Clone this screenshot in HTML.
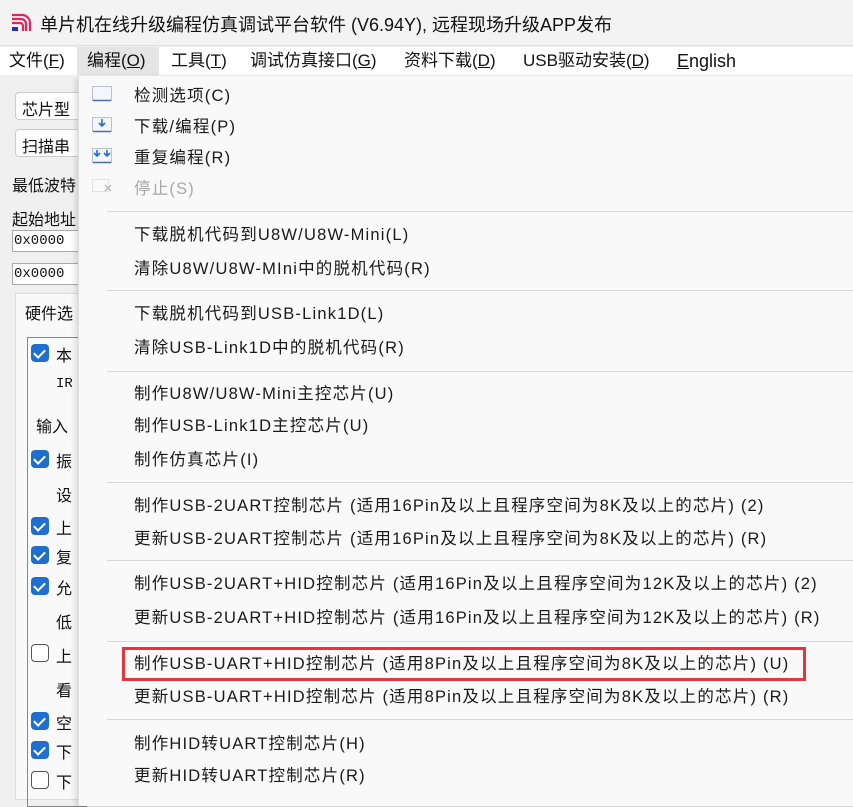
<!DOCTYPE html>
<html><head><meta charset="utf-8"><style>
*{margin:0;padding:0;box-sizing:border-box}
body{width:853px;height:800px;overflow:hidden;background:#f0f0f0;font-family:"Liberation Sans","Noto Sans CJK SC",sans-serif;position:relative;color:#111}
.a{position:absolute;white-space:nowrap}
#title{left:0;top:0;width:853px;height:46px;background:#f3f3f3;border-bottom:1px solid #e0e0e0}
#mb{left:0;top:47px;width:853px;height:28px;background:#fff;font-size:17px}
.mi{position:absolute;top:2px;line-height:24px}
.sel{background:#e5e5e5;}
#menu{left:78px;top:76px;width:780px;height:730px;background:#f9f9f9;border-left:1px solid #ddd;box-shadow:-2px 2px 6px rgba(0,0,0,.15)}
.it{position:absolute;left:55px;font-size:16.5px;letter-spacing:1.2px;color:#1a1a1a;line-height:20px;margin-top:2px}
.sep{position:absolute;left:28px;right:0;height:1px;background:#d8d8d8}
.cb{position:absolute;left:31px;width:18px;height:18px;border-radius:4px;background:#1e6fd0}
.cb::after{content:"";position:absolute;left:5px;top:3px;width:5px;height:9px;border:solid #fff;border-width:0 2px 2px 0;transform:rotate(45deg)}
.cb.u{background:#fff;border:1px solid #555}
.cb.u::after{display:none}
.lt{position:absolute;font-size:16px}
</style></head><body>
<div class="a" id="title">
<svg style="position:absolute;left:10px;top:13px" width="22" height="20" viewBox="0 0 22 20"><path d="M2 2h10a8 8 0 0 1 8 8v8M2 6h9a5 5 0 0 1 5 5v7M2 10h8a3 3 0 0 1 3 3v5" fill="none" stroke="#e0245e" stroke-width="2.2"/><rect x="2" y="14" width="6" height="4" fill="#2030c0"/></svg>
<div class="a" style="left:40px;top:11px;font-size:18px">单片机在线升级编程仿真调试平台软件 (V6.94Y), 远程现场升级APP发布</div>
</div>
<div class="a" id="mb">
<span class="mi" style="left:9px">文件(<u>F</u>)</span>
<span class="mi sel" style="left:77px;top:0;height:28px;width:82px;padding:2px 0 0 10px">编程(<u>O</u>)</span>
<span class="mi" style="left:171px">工具(<u>T</u>)</span>
<span class="mi" style="left:250px">调试仿真接口(<u>G</u>)</span>
<span class="mi" style="left:404px">资料下载(<u>D</u>)</span>
<span class="mi" style="left:523px">USB驱动安装(<u>D</u>)</span>
<span class="mi" style="left:677px;font-size:18px"><u>E</u>nglish</span>
</div>
<div class="a" style="left:15px;top:92px;width:70px;height:28px;background:#fff;border:1px solid #ccc;border-radius:4px;font-size:16px;padding:3px 6px">芯片型</div>
<div class="a" style="left:15px;top:129px;width:70px;height:28px;background:#fff;border:1px solid #ccc;border-radius:4px;font-size:16px;padding:3px 6px">扫描串</div>
<div class="a" style="left:12px;top:172px;font-size:16px">最低波特</div>
<div class="a" style="left:12px;top:206px;font-size:16px">起始地址</div>
<div class="a" style="left:12px;top:230px;width:70px;height:22px;background:#fff;border:1px solid #aaa;font-family:'Liberation Mono',monospace;font-size:14px;padding:2px 1px">0x0000</div>
<div class="a" style="left:12px;top:263px;width:70px;height:22px;background:#fff;border:1px solid #aaa;font-family:'Liberation Mono',monospace;font-size:14px;padding:2px 1px">0x0000</div>
<div class="a" style="left:15px;top:293px;width:70px;height:507px;background:#f9f9f9;border:1px solid #ddd"></div>
<div class="a" style="left:25px;top:300px;font-size:16px">硬件选</div>
<div class="a" style="left:27px;top:337px;width:60px;height:470px;border:1px solid #888"></div>
<div class="cb" style="top:344px"></div><div class="lt" style="left:56px;top:342px">本</div>
<div class="lt" style="left:56px;top:376px;font-family:'Liberation Mono',monospace;font-size:14px">IR</div>
<div class="lt" style="left:36px;top:413px">输入</div>
<div class="cb" style="top:450px"></div><div class="lt" style="left:56px;top:448px">振</div>
<div class="lt" style="left:56px;top:482px">设</div>
<div class="cb" style="top:517px"></div><div class="lt" style="left:56px;top:515px">上</div>
<div class="cb" style="top:546px"></div><div class="lt" style="left:56px;top:544px">复</div>
<div class="cb" style="top:577px"></div><div class="lt" style="left:56px;top:575px">允</div>
<div class="lt" style="left:56px;top:609px">低</div>
<div class="cb u" style="top:644px"></div><div class="lt" style="left:56px;top:643px">上</div>
<div class="lt" style="left:56px;top:677px">看</div>
<div class="cb" style="top:712px"></div><div class="lt" style="left:56px;top:710px">空</div>
<div class="cb" style="top:741px"></div><div class="lt" style="left:56px;top:739px">下</div>
<div class="cb u" style="top:771px"></div><div class="lt" style="left:56px;top:769px">下</div>
<div class="a" id="menu">
<svg style="position:absolute;left:12px;top:6px" width="22" height="112" viewBox="0 0 22 112">
<g fill="#f3f6fb" stroke="#7a8aa5" stroke-dasharray="1 1"><rect x="1.5" y="4.5" width="19" height="14"/><rect x="1.5" y="35.5" width="19" height="14"/><rect x="1.5" y="66.5" width="19" height="14"/></g>
<path d="M2 18.5h18M2 49.5h18M2 80.5h18" stroke="#4a6fa5" stroke-width="1.5"/>
<path d="M11 37v7M8 41l3 3 3-3M6 68v6M3 71l3 3 3-3M16 68v6M13 71l3 3 3-3" stroke="#1e6fd0" stroke-width="1.6" fill="none"/>
<rect x="1.5" y="97.5" width="16" height="12" fill="none" stroke="#ccc" stroke-dasharray="1 1"/>
<path d="M14 103l6 6M20 103l-6 6" stroke="#bbb" stroke-width="1.5"/>
</svg>
<div class="it" style="top:8px">检测选项(C)</div>
<div class="it" style="top:39px">下载/编程(P)</div>
<div class="it" style="top:70px">重复编程(R)</div>
<div class="it" style="top:101px;color:#a8a8a8">停止(S)</div>
<div class="sep" style="top:135px"></div>
<div class="it" style="top:147px">下载脱机代码到U8W/U8W-Mini(L)</div>
<div class="it" style="top:181px">清除U8W/U8W-MIni中的脱机代码(R)</div>
<div class="sep" style="top:214px"></div>
<div class="it" style="top:226px">下载脱机代码到USB-Link1D(L)</div>
<div class="it" style="top:260px">清除USB-Link1D中的脱机代码(R)</div>
<div class="sep" style="top:295px"></div>
<div class="it" style="top:306px">制作U8W/U8W-Mini主控芯片(U)</div>
<div class="it" style="top:338px">制作USB-Link1D主控芯片(U)</div>
<div class="it" style="top:372px">制作仿真芯片(I)</div>
<div class="sep" style="top:406px"></div>
<div class="it" style="top:418px">制作USB-2UART控制芯片 (适用16Pin及以上且程序空间为8K及以上的芯片) (2)</div>
<div class="it" style="top:451px">更新USB-2UART控制芯片 (适用16Pin及以上且程序空间为8K及以上的芯片) (R)</div>
<div class="sep" style="top:484px"></div>
<div class="it" style="top:496px">制作USB-2UART+HID控制芯片 (适用16Pin及以上且程序空间为12K及以上的芯片) (2)</div>
<div class="it" style="top:530px">更新USB-2UART+HID控制芯片 (适用16Pin及以上且程序空间为12K及以上的芯片) (R)</div>
<div class="sep" style="top:565px"></div>
<div style="position:absolute;left:43px;top:571px;width:684px;height:34px;border:3px solid #e0383e"></div>
<div class="it" style="top:576px">制作USB-UART+HID控制芯片 (适用8Pin及以上且程序空间为8K及以上的芯片) (U)</div>
<div class="it" style="top:609px">更新USB-UART+HID控制芯片 (适用8Pin及以上且程序空间为8K及以上的芯片) (R)</div>
<div class="sep" style="top:643px"></div>
<div class="it" style="top:656px">制作HID转UART控制芯片(H)</div>
<div class="it" style="top:688px">更新HID转UART控制芯片(R)</div>
</div>
</body></html>
